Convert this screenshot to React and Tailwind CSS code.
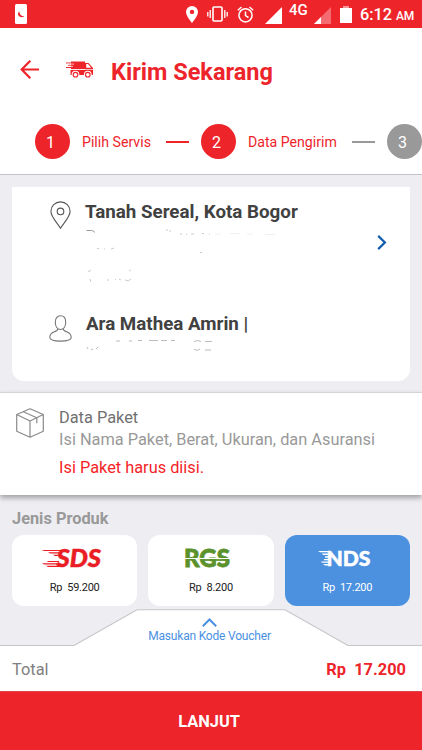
import React from "react";

const steps = [
  { id: 1, label: "Pilih Servis", active: true },
  { id: 2, label: "Data Pengirim", active: true },
  { id: 3, label: "", active: false },
];

const StatusBar = () => (
  <div className="h-7 bg-[#ee242b] flex items-center text-white shrink-0">
    <svg className="ml-[15px] w-3 h-5 shrink-0" viewBox="0 0 12 20">
      <rect width="12" height="20" rx="1.5" fill="white" />
      <path
        d="M4.3 7.2Q1.5 10 4.4 12.4Q7 14 9.3 12.2Q4.5 12.2 4.3 7.2Z"
        fill="#ee242b"
      />
    </svg>
    <svg className="ml-[159px] w-3 h-[17px] shrink-0" viewBox="0 0 12 17">
      <path
        fillRule="evenodd"
        d="M6 0a6 6 0 0 1 6 6c0 4-6 11-6 11S0 10 0 6a6 6 0 0 1 6-6Zm0 3.7a2.2 2.2 0 1 0 0 4.4 2.2 2.2 0 0 0 0-4.4Z"
        fill="white"
      />
    </svg>
    <svg
      className="ml-[8px] w-[23px] h-4 shrink-0"
      viewBox="0 0 23 16"
      fill="none"
      stroke="white"
    >
      <rect x="7" y="1" width="9" height="14" rx="1" strokeWidth="1.6" />
      <path
        d="M4.2 4v8M1.8 6v4.5M18.8 4v8M21.2 6v4.5"
        strokeWidth="1.3"
      />
    </svg>
    <svg
      className="ml-[8px] w-[17px] h-[17px] shrink-0"
      viewBox="0 0 17 17"
      fill="none"
      stroke="white"
      strokeWidth="1.5"
    >
      <circle cx="8.5" cy="9.3" r="6.6" />
      <path d="M8.5 5.5v4.2l3 1.8M.8 4.2 4.5 1M16.2 4.2 12.5 1" />
    </svg>
    <svg
      className="ml-[11px] mt-[2px] w-[17px] h-[17px] shrink-0"
      viewBox="0 0 17 17"
    >
      <path d="M17 0v17H0Z" fill="white" />
    </svg>
    <span className="ml-[7px] -mt-[8px] w-5 text-[15px] leading-4 font-medium">
      4G
    </span>
    <svg
      className="ml-[5px] mt-[2px] w-[17px] h-[17px] shrink-0"
      viewBox="0 0 17 17"
    >
      <path d="M17 0v17H0Z" fill="#f46c71" />
      <path d="M7 10v7H0Z" fill="white" />
    </svg>
    <svg className="ml-[9px] w-3 h-[17px] shrink-0" viewBox="0 0 12 17">
      <path d="M3 0h6v2H3Z" fill="#f7979a" />
      <path d="M0 2h12v15H0Z" fill="white" />
    </svg>
    <span className="ml-[8px] mt-[3px] text-[16.3px] leading-5 font-medium whitespace-nowrap">
      6:12<span className="ml-[4px] text-[12px] tracking-[-0.3px]">AM</span>
    </span>
  </div>
);

const Header = () => (
  <div className="h-[87px] flex items-center">
    <svg
      className="ml-5 w-[19px] h-[19px] -mt-[5px]"
      viewBox="0 0 19 19"
      fill="none"
      stroke="#ee242b"
      strokeWidth="2.2"
    >
      <path d="M10.3.8 1.7 9.5l8.6 8.7M1.5 9.5H19" />
    </svg>
    <svg className="ml-[27px] w-[27px] h-[17px] -mt-[4px]" viewBox="0 0 27 17">
      <path d="M5 .5h14v7.5H5Z" fill="#ee242b" />
      <path d="M0 2h7M2 4.2h5M0 6.5h7" stroke="#ee242b" strokeWidth="1" />
      <path d="M1 3.1h7M3 5.4h4" stroke="white" strokeWidth=".7" />
      <path
        fillRule="evenodd"
        d="M19 2h3.5l4.5 5v1.3h-8Zm1.2 1v3.8h5L22 3Z"
        fill="#ee242b"
      />
      <path d="M4.5 8.9H27V14H4.5Z" fill="#ee242b" />
      <g fill="white" stroke="#ee242b" strokeWidth="1.1">
        <circle cx="9.5" cy="13.5" r="3.3" stroke="white" />
        <circle cx="21.8" cy="13.5" r="3.3" stroke="white" />
        <circle cx="9.5" cy="13.7" r="2.3" />
        <circle cx="21.8" cy="13.7" r="2.3" />
      </g>
    </svg>
    <h1 className="ml-[18px] text-[23.5px] leading-7 font-bold text-[#ee242b] whitespace-nowrap">
      Kirim Sekarang
    </h1>
  </div>
);

const Stepper = () => (
  <div className="h-[59px] pl-[35px] pt-[9px] flex overflow-hidden">
    {steps.map((step) => (
      <div key={step.id} className="flex items-center h-[35px] shrink-0">
        <div
          className={`w-[35px] h-[35px] rounded-full flex items-center justify-center pt-[2px] pr-[4px] text-white text-[16px] ${
            step.active ? "bg-[#ee242b]" : "bg-[#999999]"
          }`}
        >
          {step.id}
        </div>
        {step.label && (
          <>
            <span className="ml-3 mt-[3px] text-[14.15px] text-[#ee242b] whitespace-nowrap">
              {step.label}
            </span>
            <div
              className={`h-[2px] w-[23px] ml-[15px] mr-3 ${
                step.id === 1 ? "bg-[#ee242b]" : "bg-[#999999]"
              }`}
            />
          </>
        )}
      </div>
    ))}
  </div>
);

const SenderCard = () => (
  <div className="mx-3 mt-3 h-[194px] bg-white rounded-b-xl flex items-start">
    <div className="w-[340px] pt-[14px]">
      <div className="flex h-[113px]">
        <svg
          className="ml-[38px] w-[21px] h-7 shrink-0"
          viewBox="0 0 21 28"
          fill="none"
          stroke="#555"
          strokeWidth="1.1"
        >
          <path d="M10.5 27.3C8 22.5.9 16.2.9 10.2a9.6 9.3 0 0 1 19.2 0c0 6-7.1 12.3-9.6 17.1Z" />
          <circle cx="10.5" cy="10.4" r="3.3" />
        </svg>
        <div className="ml-[14px] pt-[1px]">
          <h2 className="text-[18.75px] leading-5 font-bold text-[#414141] whitespace-nowrap">
            Tanah Sereal, Kota Bogor
          </h2>
          <svg
            className="mt-[7px] w-[230px] h-[62px]"
            viewBox="0 0 230 62"
            fill="none"
            stroke="#ccc"
            strokeWidth="1"
          >
            <path d="M1.5 1.5h5q2.5 0 3 2" stroke="#999" />
            <path d="M82 0v2M84 2h2M95 5h2M101 5.5h1M106 5h3M117 4.500h2M124 5h1" />
            <path
              d="M130 5h6M145 4.500h10M162 5h6M180 5.500h10"
              stroke="#f0f0f0"
            />
            <path d="M12 19.500h2M19 20h1M26 20l3-1M115 23.500h2" />
            <path d="M3 42.500l3-1M5 50l1 3M22 51h2M30 51l1-1M34 50l2 1M40 51q4 2 6-1M44 42l2-1" />
          </svg>
        </div>
      </div>
      <div className="flex">
        <svg
          className="ml-[37px] mt-[1px] w-[23px] h-[27px] shrink-0"
          viewBox="0 0 23 27"
          fill="none"
          stroke="#777"
          strokeWidth="1.1"
        >
          <path d="M11.5.8c-3.500 0-5.200 2.700-5.200 6.400 0 4 2 7.300 5.200 7.300s5.200-3.300 5.200-7.300c0-3.700-1.700-6.400-5.200-6.400Z" />
          <path d="M8.800 13.800c0 2-1.500 2.300-3.500 3C2 18 .8 20 .8 22.500c0 2.500 4.700 3.600 10.700 3.600s10.700-1.100 10.700-3.600c0-2.500-1.200-4.500-4.500-5.700-2-.7-3.500-1-3.500-3" />
        </svg>
        <div className="ml-[14px]">
          <h2 className="text-[18.75px] leading-5 font-bold text-[#414141] whitespace-nowrap">
            Ara Mathea Amrin |
          </h2>
          <svg
            className="mt-[3px] w-[140px] h-[18px]"
            viewBox="0 0 140 18"
            fill="none"
            stroke="#bbb"
            strokeWidth="1"
          >
            <path d="M30 4h4M43 4h3M52 3.500h4M63 3.500h9M75 3.500h6M85 3.500h4" />
            <path d="M1 10l1 2M5 13l2-1M10 12l2-2M108 4.500q4-2 7 0M119 4.500h7M108 12q3 3 6 0M119 13h6" />
          </svg>
        </div>
      </div>
    </div>
    <svg
      className="ml-[25px] mt-[48px] w-[10px] h-[15px]"
      viewBox="0 0 10 15"
      fill="none"
      stroke="#0f5bb0"
      strokeWidth="2.2"
    >
      <path d="M1.2.9l6.7 6.6-6.7 6.6" />
    </svg>
  </div>
);

const PackageSection = () => (
  <div className="relative mt-[11px] h-[103px] bg-white border-t border-[#d3d3d8] shadow-[0_3px_5px_rgba(0,0,0,0.32)] flex">
    <svg
      className="ml-[16px] mt-[15px] w-7 h-[30px] shrink-0"
      viewBox="0 0 28 30"
      fill="none"
      stroke="#8a8a8a"
      strokeWidth="1.2"
      strokeLinejoin="round"
    >
      <path d="M14 .8 27.3 6.500v16.800L14 29.200.7 23.300V6.500ZM.7 6.500 14 13l13.300-6.500M14 13v16.200" />
      <path d="M7.3 3.700 20.800 9.700v5.500" />
    </svg>
    <div className="ml-[15px] pt-[14px] whitespace-nowrap">
      <p className="text-[16.35px] leading-[22px] text-[#707070]">
        Data Paket
      </p>
      <p className="text-[16.35px] leading-[22px] text-[#999999]">
        Isi Nama Paket, Berat, Ukuran, dan Asuransi
      </p>
      <p className="mt-[6px] text-[16.35px] leading-[22px] text-[#f51f28]">
        Isi Paket harus diisi.
      </p>
    </div>
  </div>
);

const SdsLogo = () => (
  <svg className="-my-[6px] w-[64px] h-8" viewBox="0 -7 64 32">
    <text
      x="14.5"
      y="18"
      textLength="44.5"
      lengthAdjust="spacingAndGlyphs"
      className="font-[Lato] font-black italic text-[24.5px]"
      fill="#ea1d25"
      stroke="#ea1d25"
      strokeWidth=".5"
    >
      SDS
    </text>
    <path
      d="M0 1h23v1H2ZM6 3.300h14v1.200H8ZM11 5.800h7v1.300h-5ZM5 12h12v1H6ZM0 14.200h18v1.300H2ZM4 16.800h16V18H6Z"
      fill="#ea1d25"
    />
  </svg>
);

const RgsLogo = () => (
  <svg className="-my-[6px] w-[50px] h-8" viewBox="-1 -7 50 32">
    <text
      x="0"
      y="18"
      textLength="46"
      lengthAdjust="spacingAndGlyphs"
      className="font-[Lato] font-black text-[24.5px]"
      fill="#5b922c"
      stroke="#5b922c"
      strokeWidth=".8"
    >
      RGS
    </text>
    <path d="M0 9.500h46" stroke="white" strokeWidth="1.1" />
    <path d="M17 11h28" stroke="#5b922c" strokeWidth="1.8" />
  </svg>
);

const NdsLogo = () => (
  <svg className="-my-[6px] w-[56px] h-8" viewBox="0 -7 56 32">
    <text
      x="8.5"
      y="16.5"
      textLength="44"
      lengthAdjust="spacingAndGlyphs"
      className="font-[Lato] font-black text-[20.5px]"
      fill="white"
      stroke="white"
      strokeWidth=".5"
    >
      NDS
    </text>
    <path
      d="M0 2h13v1.300H2ZM4 4.500h8v1.400H5ZM7 7.300h5v1.400H7ZM6 10h6v1.300H6ZM3 12.500h9v1.300H4ZM5 15h7v1.500H7Z"
      fill="white"
    />
  </svg>
);

const products = [
  { id: "sds", price: "59.200", logo: <SdsLogo />, offset: "pr-[1px]" },
  { id: "rgs", price: "8.200", logo: <RgsLogo />, offset: "pr-[6px]" },
  { id: "nds", price: "17.200", logo: <NdsLogo />, offset: "pr-[3px]" },
];

const ProductList = () => (
  <div className="pt-[13px] px-3 h-[114px]">
    <h3 className="text-[16.35px] leading-[22px] font-bold text-[#999999]">
      Jenis Produk
    </h3>
    <div className="mt-[5px] grid grid-cols-3 gap-[11px]">
      {products.map((product) => (
        <div
          key={product.id}
          className={`h-[71px] rounded-xl pt-[13px] flex flex-col items-center ${
            product.id === "nds"
              ? "bg-[#4c91df] text-white"
              : "bg-white text-[#222222]"
          }`}
        >
          <div className={`h-5 ${product.offset}`}>{product.logo}</div>
          <p className="mt-[12px] text-[11px] tracking-[-0.25px] leading-4 whitespace-pre">
            Rp{"  "}
            {product.price}
          </p>
        </div>
      ))}
    </div>
  </div>
);

const VoucherTab = () => (
  <div className="relative h-[37px]">
    <svg
      className="absolute inset-0 w-[422px] h-[37px]"
      viewBox="0 0 422 37"
      fill="none"
    >
      <path
        d="M-1 36.500H74L137 .8h148l63 35.700h75V38H-1Z"
        fill="white"
        stroke="#c6c6c8"
        strokeWidth="1.1"
      />
    </svg>
    <div className="relative flex flex-col items-center pt-[9px] pr-[3px]">
      <svg
        className="w-[15px] h-[9px]"
        viewBox="0 0 15 9"
        fill="none"
        stroke="#4a90e2"
        strokeWidth="2"
      >
        <path d="M.8 8.200 7.500 1.500l6.700 6.700" />
      </svg>
      <span className="mt-[1px] text-[12px] tracking-[-0.2px] leading-4 text-[#4a90e2]">
        Masukan Kode Voucher
      </span>
    </div>
  </div>
);

const App = () => {
  return (
    <div className="w-[422px] h-[750px] overflow-hidden flex flex-col bg-[#eeedf2] font-[Roboto,sans-serif]">
      <StatusBar />
      <div className="bg-white border-b border-[#c4c4c8] h-[147px] shrink-0">
        <Header />
        <Stepper />
      </div>
      <SenderCard />
      <PackageSection />
      <ProductList />
      <VoucherTab />
      <div className="h-[45px] bg-white pt-[4px] pl-3 pr-4 flex items-center justify-between text-[16.4px]">
        <span className="text-[#808080]">Total</span>
        <span className="font-bold text-[#ee242b] whitespace-pre">
          Rp{"  "}17.200
        </span>
      </div>
      <button className="h-[59px] shrink-0 bg-[#ee242b] border-t border-[#d9474b] pt-[2px] pr-[4px] text-white text-[16.4px] font-bold">
        LANJUT
      </button>
    </div>
  );
};

export default App;
